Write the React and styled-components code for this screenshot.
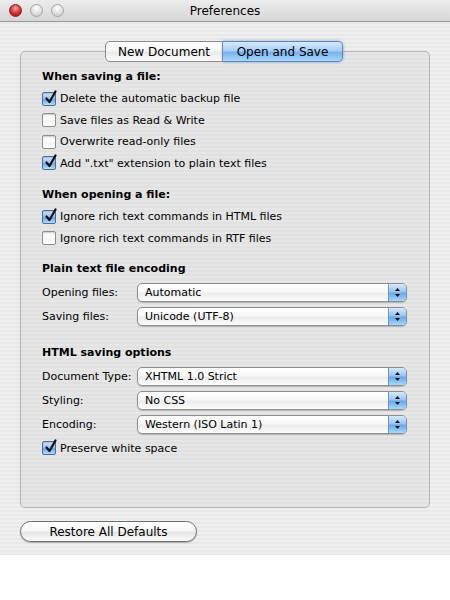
import React from 'react';
import styled, { createGlobalStyle } from 'styled-components';

const GlobalStyle = createGlobalStyle`
    body {
        margin: 0;
        background: #ffffff;
        font-family: 'DejaVu Sans', 'Liberation Sans', sans-serif;
    }
`

const Window = styled.div`
    width: 450px;
    height: 555px;
    display: flex;
    flex-direction: column;
    background: repeating-linear-gradient(to bottom, #efefef 0px, #efefef 2px, #e8e8e8 2px, #e8e8e8 4px);
    font-size: 11px;
    color: #000;
`

const TitleBar = styled.div`
    position: relative;
    height: 21px;
    display: flex;
    align-items: center;
    justify-content: center;
    background: linear-gradient(to bottom, #ececec, #d6d6d6);
    border-bottom: 1px solid #9a9a9a;
    font-size: 12px;
`

const Lights = styled.div`
    position: absolute;
    left: 9px;
    top: 4px;
    display: flex;
    gap: 8px;
`

const Light = styled.span`
    width: 13px;
    height: 13px;
    border-radius: 50%;
    box-sizing: border-box;
    border: 1px solid ${p => (p.$red ? '#8a2020' : '#a4a4a4')};
    background: ${p => (p.$red
        ? 'radial-gradient(circle at 50% 30%, #f3b0b0 0, #e25050 35%, #b81a1a 75%, #e05a5a 100%)'
        : 'radial-gradient(circle at 50% 30%, #ffffff 0, #e8e8e8 40%, #cfcfcf 80%, #e6e6e6 100%)')};
`

const Content = styled.div`
    display: flex;
    flex-direction: column;
    padding: 19px 20px 0 20px;
`

const Tabs = styled.div`
    display: flex;
    align-self: center;
    margin-left: -2px;
    margin-bottom: -11px;
    position: relative;
    z-index: 1;
`

const Tab = styled.div`
    height: 21px;
    box-sizing: border-box;
    width: ${p => p.$w}px;
    display: flex;
    align-items: center;
    justify-content: center;
    font-size: 12px;
    border: 1px solid ${p => (p.$active ? '#5c86b8' : '#8c8c8c')};
    border-radius: ${p => (p.$first ? '5px 0 0 5px' : '0 5px 5px 0')};
    border-left-width: ${p => (p.$first ? '1px' : '0')};
    background: ${p => (p.$active
        ? 'linear-gradient(to bottom, #d6eafd 0%, #a8cff6 45%, #78b2ee 55%, #a9d8fd 100%)'
        : 'linear-gradient(to bottom, #ffffff 0%, #f7f7f7 45%, #ebebeb 55%, #fbfbfb 100%)')};
    box-shadow: ${p => (p.$active ? '0 0 3px rgba(70, 130, 210, 0.7)' : 'none')};
`

const Group = styled.div`
    box-sizing: border-box;
    height: 457px;
    border: 1px solid #b4b4b4;
    border-radius: 5px;
    background: repeating-linear-gradient(to bottom, #e6e6e6 0px, #e6e6e6 2px, #e1e1e1 2px, #e1e1e1 4px);
    padding: 14px 21px 0 21px;
    display: flex;
    flex-direction: column;
`

const Section = styled.div`
    display: flex;
    flex-direction: column;
    margin-top: ${p => p.$gap || 0}px;
`

const Heading = styled.div`
    height: 20px;
    display: flex;
    align-items: center;
    font-weight: bold;
    margin-bottom: 2px;
`

const CheckRow = styled.label`
    height: ${p => p.$h || 21.5}px;
    display: flex;
    align-items: center;
    gap: 4px;
`

const Box = styled.span`
    position: relative;
    width: 14px;
    height: 14px;
    box-sizing: border-box;
    border-radius: 2px;
    border: 1px solid ${p => (p.$on ? '#4a6f9e' : '#8e8e8e')};
    background: ${p => (p.$on
        ? 'linear-gradient(to bottom, #cfe6fd 0%, #8fc1f3 50%, #6aa8ea 55%, #b6dcfd 100%)'
        : 'linear-gradient(to bottom, #f2f2f2 0%, #ffffff 50%, #f3f3f3 55%, #ffffff 100%)')};
    box-shadow: inset 0 1px 1px rgba(0, 0, 0, 0.15);

    svg {
        position: absolute;
        left: 1px;
        top: -3px;
    }
`

const FieldRow = styled.div`
    height: 24px;
    display: flex;
    align-items: center;
`

const FieldLabel = styled.span`
    width: 95px;
`

const Popup = styled.div`
    width: 270px;
    height: 19px;
    box-sizing: border-box;
    display: flex;
    border: 1px solid #8d8d8d;
    border-radius: 5px;
    overflow: hidden;
    background: linear-gradient(to bottom, #ffffff 0%, #f8f8f8 45%, #ececec 55%, #fcfcfc 100%);
    box-shadow: 0 1px 1px rgba(0, 0, 0, 0.2);
`

const PopupText = styled.span`
    flex: 1;
    display: flex;
    align-items: center;
    padding-left: 7px;
`

const Arrows = styled.span`
    width: 17px;
    display: flex;
    align-items: center;
    justify-content: center;
    border-left: 1px solid #6d93c4;
    background: linear-gradient(to bottom, #d6eafd 0%, #99c6f4 45%, #6aa8ea 55%, #a9d8fd 100%);
`

const Footer = styled.div`
    padding-top: 13px;
`

const Button = styled.div`
    width: 177px;
    height: 21px;
    box-sizing: border-box;
    display: flex;
    align-items: center;
    justify-content: center;
    border: 1px solid #6e6e6e;
    border-radius: 11px;
    font-size: 12px;
    background: linear-gradient(to bottom, #ffffff 0%, #f6f6f6 45%, #e6e6e6 55%, #fafafa 100%);
    box-shadow: 0 1px 1px rgba(0, 0, 0, 0.25);
`

const Check = ({ on, h, children }) => (
    <CheckRow $h={h}>
        <Box $on={on}>
            {on && (
                <svg width="14" height="15" viewBox="0 0 14 15">
                    <path d="M2.5 8.5 L5.5 12 L11.5 1.5" fill="none" stroke="#111" strokeWidth="2.2" strokeLinecap="round" strokeLinejoin="round" />
                </svg>
            )}
        </Box>
        {children}
    </CheckRow>
)

const Select = ({ label, value }) => (
    <FieldRow>
        <FieldLabel>{label}</FieldLabel>
        <Popup>
            <PopupText>{value}</PopupText>
            <Arrows>
                <svg width="7" height="11" viewBox="0 0 7 11">
                    <path d="M3.5 1 L6 4 L1 4 Z" fill="#111" />
                    <path d="M3.5 10 L6 7 L1 7 Z" fill="#111" />
                </svg>
            </Arrows>
        </Popup>
    </FieldRow>
)

export default function App() {
    return (
        <Window>
            <GlobalStyle />
            <TitleBar>
                <Lights>
                    <Light $red />
                    <Light />
                    <Light />
                </Lights>
                Preferences
            </TitleBar>
            <Content>
                <Tabs>
                    <Tab $first $w={118}>New Document</Tab>
                    <Tab $active $w={120}>Open and Save</Tab>
                </Tabs>
                <Group>
                    <Section>
                        <Heading>When saving a file:</Heading>
                        <Check on>Delete the automatic backup file</Check>
                        <Check>Save files as Read &amp; Write</Check>
                        <Check>Overwrite read-only files</Check>
                        <Check on>Add ".txt" extension to plain text files</Check>
                    </Section>
                    <Section $gap={10}>
                        <Heading>When opening a file:</Heading>
                        <Check on>Ignore rich text commands in HTML files</Check>
                        <Check>Ignore rich text commands in RTF files</Check>
                    </Section>
                    <Section $gap={9}>
                        <Heading>Plain text file encoding</Heading>
                        <Select label="Opening files:" value="Automatic" />
                        <Select label="Saving files:" value="Unicode (UTF-8)" />
                    </Section>
                    <Section $gap={14}>
                        <Heading>HTML saving options</Heading>
                        <Select label="Document Type:" value="XHTML 1.0 Strict" />
                        <Select label="Styling:" value="No CSS" />
                        <Select label="Encoding:" value="Western (ISO Latin 1)" />
                        <Check on h={24}>Preserve white space</Check>
                    </Section>
                </Group>
                <Footer>
                    <Button>Restore All Defaults</Button>
                </Footer>
            </Content>
        </Window>
    );
}
